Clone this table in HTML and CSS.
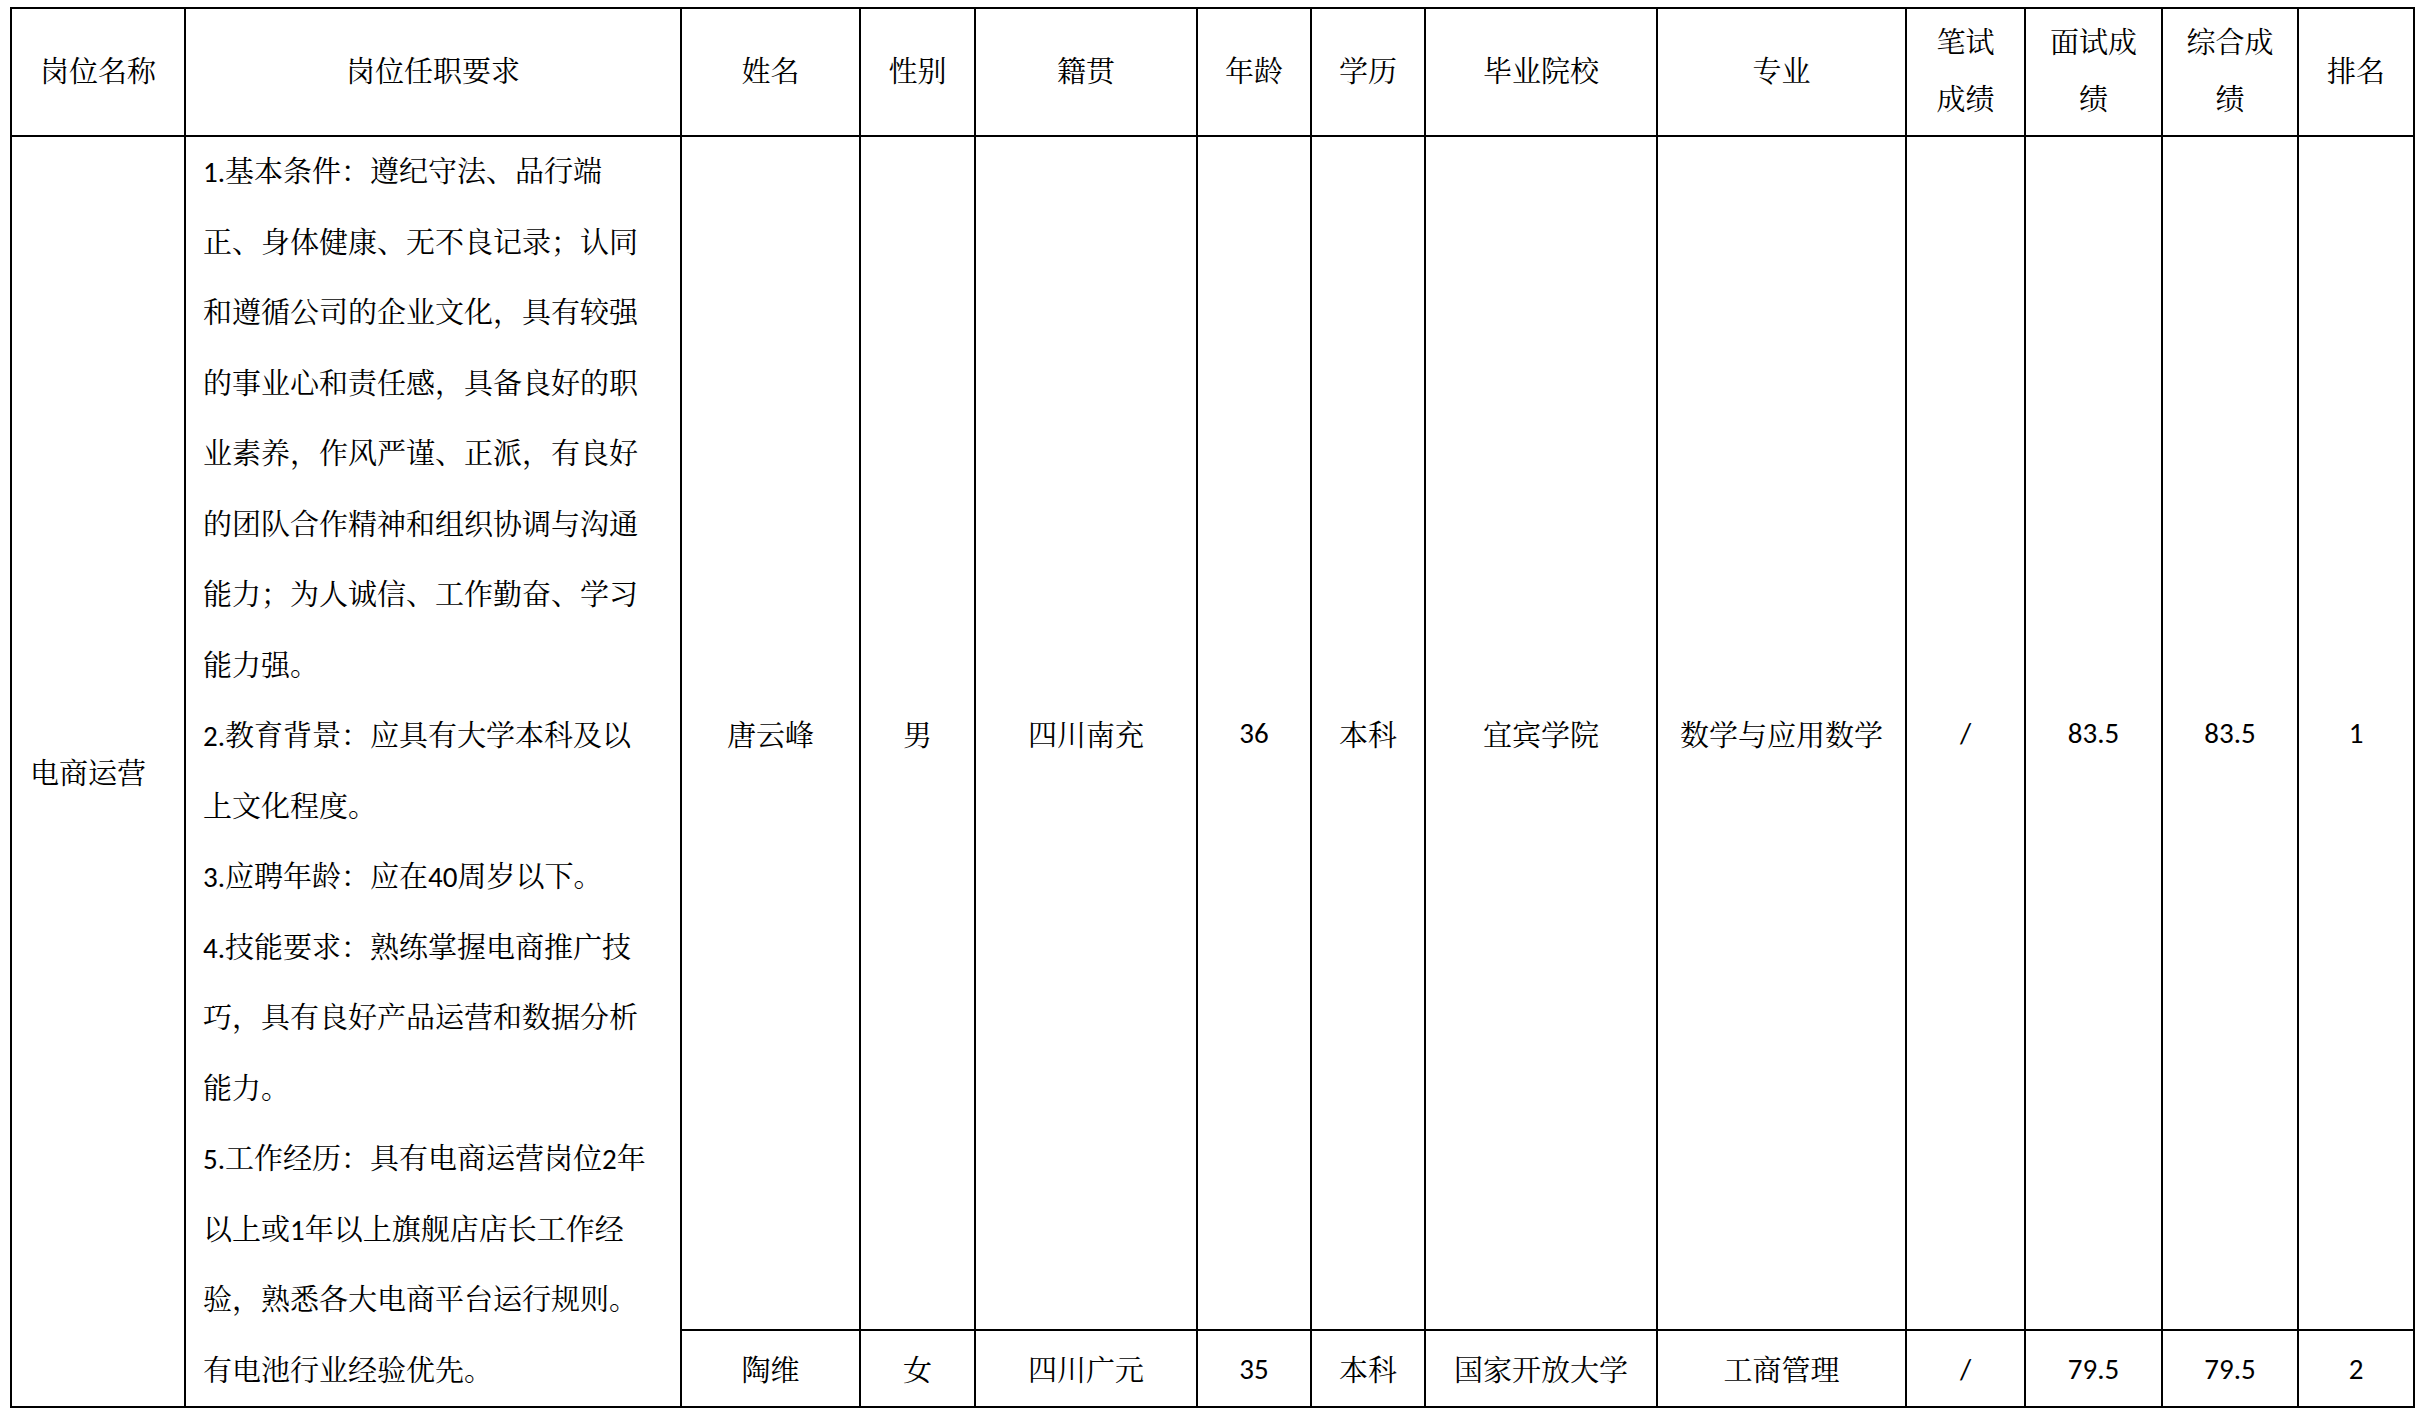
FILE: index.html
```html
<!DOCTYPE html>
<html lang="zh-CN">
<head>
<meta charset="utf-8">
<title>电商运营岗位成绩</title>
<link rel="stylesheet" href="styles.css">
</head>
<body>
<div class="page">
<table class="grid">
<colgroup>
<col class="c1"><col class="c2"><col class="c3"><col class="c4"><col class="c5"><col class="c6"><col class="c7"><col class="c8"><col class="c9"><col class="c10"><col class="c11"><col class="c12"><col class="c13">
</colgroup>
<thead>
<tr class="head">
<th>岗位名称</th>
<th>岗位任职要求</th>
<th>姓名</th>
<th>性别</th>
<th>籍贯</th>
<th>年龄</th>
<th>学历</th>
<th>毕业院校</th>
<th>专业</th>
<th>笔试<br>成绩</th>
<th>面试成<br>绩</th>
<th>综合成<br>绩</th>
<th>排名</th>
</tr>
</thead>
<tbody>
<tr class="row-a">
<td rowspan="2" class="post">电商运营</td>
<td rowspan="2" class="req">1.基本条件：遵纪守法、品行端<br>正、身体健康、无不良记录；认同<br>和遵循公司的企业文化，具有较强<br>的事业心和责任感，具备良好的职<br>业素养，作风严谨、正派，有良好<br>的团队合作精神和组织协调与沟通<br>能力；为人诚信、工作勤奋、学习<br>能力强。<br>2.教育背景：应具有大学本科及以<br>上文化程度。<br>3.应聘年龄：应在40周岁以下。<br>4.技能要求：熟练掌握电商推广技<br>巧，具有良好产品运营和数据分析<br>能力。<br>5.工作经历：具有电商运营岗位2年<br>以上或1年以上旗舰店店长工作经<br>验，熟悉各大电商平台运行规则。<br>有电池行业经验优先。</td>
<td>唐云峰</td>
<td>男</td>
<td>四川南充</td>
<td>36</td>
<td>本科</td>
<td>宜宾学院</td>
<td>数学与应用数学</td>
<td>/</td>
<td>83.5</td>
<td>83.5</td>
<td>1</td>
</tr>
<tr class="row-b">
<td>陶维</td>
<td>女</td>
<td>四川广元</td>
<td>35</td>
<td>本科</td>
<td>国家开放大学</td>
<td>工商管理</td>
<td>/</td>
<td>79.5</td>
<td>79.5</td>
<td>2</td>
</tr>
</tbody>
</table>
</div>
</body>
</html>
```

FILE: styles.css
```css
html, body {
  margin: 0;
  padding: 0;
  background: #ffffff;
}

.page {
  padding: 7px 0 0 10px;
}

.grid {
  border-collapse: collapse;
  table-layout: fixed;
  font-family: "Carlito", "Lato", "Noto Serif CJK SC", "Noto Sans CJK SC", serif;
  font-size: 29px;
  color: #000000;
}

.grid th,
.grid td {
  border: 2px solid #000000;
  padding: 0;
  text-align: center;
  vertical-align: middle;
  font-weight: normal;
  white-space: nowrap;
}

.c1 { width: 174px; }
.c2 { width: 496px; }
.c3 { width: 179px; }
.c4 { width: 115px; }
.c5 { width: 222px; }
.c6 { width: 114px; }
.c7 { width: 114px; }
.c8 { width: 232px; }
.c9 { width: 249px; }
.c10 { width: 119px; }
.c11 { width: 137px; }
.c12 { width: 136px; }
.c13 { width: 116px; }

.head {
  height: 128px;
}

.head th {
  line-height: 57px;
}

.row-a {
  height: 1194px;
}

.row-b {
  height: 77px;
}

.grid td.post {
  text-align: left;
  padding-left: 18px;
}

.grid td.req {
  text-align: left;
  vertical-align: top;
  padding-left: 17px;
  line-height: 70.5px;
}
```
